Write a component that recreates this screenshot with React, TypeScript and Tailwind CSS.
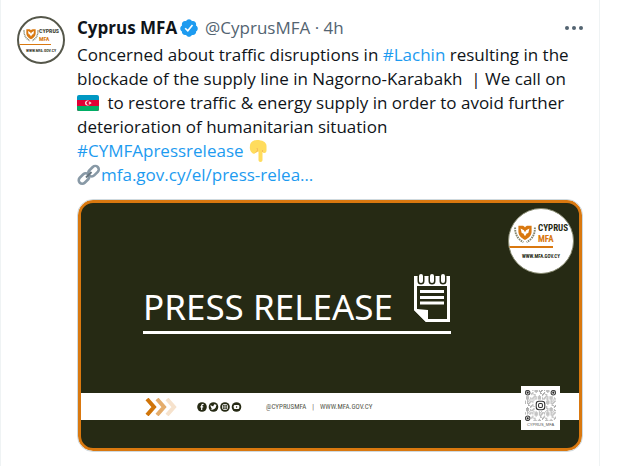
import React from "react";

const INK = "#262a14";
const ORANGE = "#d9780f";

function Emblem({ className }: { className: string }) {
  return (
    <svg viewBox="0 0 40 36" className={className} aria-hidden="true">
      <path
        d="M8 3h7c2 0 4 1 5 3 1-2 3-3 5-3h7v11c0 7-5 11-12 15C13 25 8 21 8 14z"
        fill={ORANGE}
      />
      <path d="M12 8l6 3 2 4 2-4 6-3-2 8-3 1-3 5-3-5-3-1z" fill="#fff" />
      <path
        d="M2 6c0 13 4 20 15 27M38 6c0 13-4 20-15 27"
        fill="none"
        stroke="#85876f"
        strokeWidth="3.500"
        strokeDasharray="3 1.5"
      />
    </svg>
  );
}

function VerifiedBadge() {
  return (
    <svg viewBox="0 0 24 24" className="size-5 shrink-0" role="img" aria-label="Verified account">
      <path
        fill="#1d9bf0"
        d="M22.5 12.5c0-1.58-.875-2.95-2.148-3.6.154-.435.238-.905.238-1.4 0-2.21-1.71-3.998-3.818-3.998-.47 0-.92.084-1.336.25C14.818 2.415 13.51 1.5 12 1.5s-2.816.917-3.437 2.25c-.415-.165-.866-.25-1.336-.25-2.11 0-3.818 1.79-3.818 4 0 .494.083.964.237 1.4-1.272.65-2.147 2.018-2.147 3.6 0 1.495.782 2.798 1.942 3.486-.02.17-.032.34-.032.514 0 2.21 1.708 4 3.818 4 .47 0 .92-.086 1.335-.25.62 1.334 1.926 2.25 3.437 2.25 1.512 0 2.818-.916 3.437-2.25.415.163.865.248 1.336.248 2.11 0 3.818-1.79 3.818-4 0-.174-.012-.344-.033-.513 1.158-.687 1.943-1.99 1.943-3.484z"
      />
      <path d="M7.4 12.3l3.2 3.1 5.6-7" fill="none" stroke="#fff" strokeWidth="2" />
    </svg>
  );
}

function FlagAzerbaijan() {
  return (
    <svg viewBox="0 0 22 16" className="mr-1 inline-block h-4 w-[22px] align-[-2px]" role="img" aria-label="Azerbaijan">
      <clipPath id="flag-clip">
        <rect width="22" height="16" rx="2" />
      </clipPath>
      <g clipPath="url(#flag-clip)">
        <rect width="22" height="16" fill="#0098c3" />
        <rect y="5" width="22" height="11" fill="#e00034" />
        <rect y="11" width="22" height="5" fill="#00ae65" />
      </g>
      <circle cx="10.6" cy="8" r="2.500" fill="#fff" />
      <circle cx="11.3" cy="8" r="2" fill="#e00034" />
      <path d="M13 6.6l.4 1 1-.4-.4 .8.4 1-1-.4-.4 1-.4-1-1 .4.4-1-.4-.8 1 .4z" fill="#fff" />
    </svg>
  );
}

function PointDown() {
  return (
    <svg viewBox="0 0 22 22" className="inline-block size-[22px] align-[-5px]" role="img" aria-label="Pointing down">
      <path
        fill="#ffdc5d"
        d="M2 6C2 2.500 5 0 9 0c5 0 9.500 2 9.500 6v4.500c0 1.500-.8 2.500-2 2.500s-1.500-.5-2-1V20c0 1.200-.8 2-2 2s-2-.8-2-2v-8.500L8 12.500c-1 1.500-3 1.500-4 .3C2 11.500 1.500 8 2 6z"
      />
      <path d="M7.500 12.500c2-1 2.500-2.500 1.500-4.500M14.500 12v-2" fill="none" stroke="#efa85a" strokeWidth=".7" />
    </svg>
  );
}

function ChainLink() {
  return (
    <svg viewBox="0 0 24 24" className="inline-block size-6 align-[-6px]" role="img" aria-label="Link">
      <g fill="none" strokeWidth="2.600" stroke="#8899a6">
        <rect x="10.500" y="4.700" width="12" height="7" rx="3.500" transform="rotate(-45 16.500 8.200)" />
        <rect x="1" y="12" width="12" height="7" rx="3.500" transform="rotate(-45 7 15.500)" />
        <path d="M9 14.500l5.500-5.500" stroke="#66757f" strokeWidth="2" />
      </g>
    </svg>
  );
}

function Notepad() {
  return (
    <svg viewBox="0 0 38 50" className="h-[50px] w-[38px]" aria-hidden="true">
      <path fill="#fff" d="M1 3h36v46H13L1 37z" />
      <path fill={INK} d="M4 13h30v33H15v-9L4 36z" />
      <path fill="#fff" d="M1 37l3-1 4 2 6-1v7l1 2v3h-2z" />
      <path d="M8 4v4M19 4v4M30 4v4" stroke={INK} strokeWidth="7" strokeLinecap="round" />
      <path d="M8 3v5M19 3v5M30 3v5" stroke="#fff" strokeWidth="4" strokeLinecap="round" />
      <path d="M7 18.500h24M7 24.500h24M7 30h24" stroke="#fff" strokeWidth="3" />
    </svg>
  );
}

function Chevrons() {
  return (
    <svg viewBox="0 0 32 18" className="h-[18px] w-8" fill="none" strokeWidth="4" aria-hidden="true">
      <path d="M22 1l7 8-7 8" stroke="#f6e2cc" />
      <path d="M12 1l7 8-7 8" stroke="#e4ac6b" />
      <path d="M2 1l7 8-7 8" stroke="#d07408" />
    </svg>
  );
}

function SocialIcons() {
  return (
    <svg viewBox="0 0 45 10" className="h-[10px] w-[45px]" aria-hidden="true">
      {[5, 16.5, 28, 39.5].map((x) => (
        <circle key={x} cx={x} cy="5" r="4.800" fill={INK} />
      ))}
      <path d="M6.600 2.500c-1.500-.3-1.900.3-1.900 1.500v4M3.400 4.800h2.800" fill="none" stroke="#fff" strokeWidth="1.200" />
      <path d="M13.500 3c1 1 2 1.300 3 1.300C16.500 2 18.500 2 19 3l.8-.2-.7 1C19 7 16 8.500 13.500 7.200l1.500-.6c-1-.8-1.600-2-1.500-3.600z" fill="#fff" />
      <rect x="25.500" y="2.500" width="5" height="5" rx="1.400" fill="none" stroke="#fff" strokeWidth=".8" />
      <circle cx="28" cy="5" r="1.200" fill="none" stroke="#fff" strokeWidth=".7" />
      <rect x="36.700" y="3" width="5.600" height="4" rx="1.200" fill="#fff" />
      <path d="M39 4v2l1.600-1z" fill={INK} />
    </svg>
  );
}

const MODULES = Array.from({ length: 29 * 29 }, (_, i) => ({ x: i % 29, y: Math.floor(i / 29) })).filter(
  ({ x, y }) => {
    const corner = (x < 6 && y < 6) || (x > 22 && y < 6) || (x < 6 && y > 22);
    const middle = Math.abs(x - 14) < 6 && Math.abs(y - 14) < 6;
    return !corner && !middle && (x * x * 7 + y * y * 13 + x * y * 5 + x * 3) % 11 < 5;
  }
);

function QrCode() {
  return (
    <svg viewBox="0 0 29 29" className="size-[31px]" role="img" aria-label="QR code">
      {MODULES.map(({ x, y }) => (
        <rect key={`${x}-${y}`} x={x} y={y} width=".8" height=".8" fill="#888" />
      ))}
      {[
        [2.5, 2.5],
        [26.5, 2.5],
        [2.5, 26.5],
      ].map(([x, y]) => (
        <g key={`${x}-${y}`}>
          <circle cx={x} cy={y} r="2.100" fill="none" stroke="#444" />
          <circle cx={x} cy={y} r="1" fill="#222" />
        </g>
      ))}
      <rect x="10.500" y="10.500" width="8" height="8" rx="2.500" fill="none" stroke="#333" />
      <rect x="12.700" y="12.700" width="3.600" height="3.600" rx="1" fill="none" stroke="#333" />
    </svg>
  );
}

function Avatar() {
  return (
    <div className="flex size-12 shrink-0 flex-col justify-center overflow-hidden rounded-full border-2 border-[#55574a] bg-white font-['Roboto_Condensed','Roboto',sans-serif] font-bold text-[#3c3e30]">
      <div className="flex items-center pl-1">
        <Emblem className="h-[14px] w-4 shrink-0" />
        <div className="text-[6px] leading-[8px]">
          <div>CYPRUS</div>
          <div className="text-[#d9780f]">MFA</div>
        </div>
      </div>
      <div className="mt-px h-px w-8 bg-[#d9780f]" />
      <div className="mt-1 text-center text-[4px] leading-[4px]">WWW.MFA.GOV.CY</div>
    </div>
  );
}

function PressCard() {
  return (
    <a
      href="#press-release"
      aria-label="Press release"
      className="relative mt-3 block overflow-hidden rounded-2xl border border-[#cfd9de] text-white"
    >
      <div className="overflow-hidden rounded-[15px] border-[3px] border-[#d9780f] bg-[#262a14]">
        <div className="flex h-[190px] flex-col pl-[62px] pt-[70px]">
          <div className="flex w-[308px] items-end justify-between border-b-[3px] border-white pb-2">
            <span className="whitespace-nowrap font-['Noto_Sans',sans-serif] text-[35px] leading-8">PRESS RELEASE</span>
            <Notepad />
          </div>
        </div>
        <div className="flex h-[27px] items-center bg-white pl-16 font-['Roboto_Condensed','Roboto',sans-serif] text-[7px] text-[#55574a]">
          <Chevrons />
          <div className="ml-5">
            <SocialIcons />
          </div>
          <span className="ml-6">@CYPRUSMFA</span>
          <span className="mx-1.5">|</span>
          <span>WWW.MFA.GOV.CY</span>
        </div>
        <div className="h-7" />
      </div>

      <div className="absolute right-2 top-2 flex size-[66px] flex-col justify-center overflow-hidden rounded-full border border-[#85886f] bg-white font-['Roboto_Condensed','Roboto',sans-serif] font-bold text-[#262a14]">
        <div className="flex items-center gap-0.5 pl-[5px]">
          <Emblem className="h-5 w-[22px] shrink-0" />
          <div className="text-[9px] leading-[11px]">
            <div>CYPRUS</div>
            <div className="text-[#d9780f]">MFA</div>
          </div>
        </div>
        <div className="mt-px h-0.5 w-11 bg-[#d9780f]" />
        <div className="mt-1 text-center text-[5px] leading-[8px]">WWW.MFA.GOV.CY</div>
      </div>

      <div className="absolute bottom-[21px] right-[22px] flex h-11 w-[39px] flex-col items-center bg-white pt-1 font-['Liberation_Sans',sans-serif] text-[#555]">
        <QrCode />
        <span className="text-[4px] leading-[8px]">CYPRUS_MFA</span>
      </div>
    </a>
  );
}

export default function App() {
  return (
    <main className="min-h-screen bg-white font-['Open_Sans','Noto_Sans',sans-serif] text-[17px] leading-6 text-[#0f1419]">
      <article className="flex min-h-screen max-w-[600px] gap-3 border-x border-[#eff3f4] px-4 pt-4">
        <Avatar />
        <div className="min-w-0 flex-1">
          <header className="flex items-center whitespace-nowrap pb-[3px]">
            <a href="#profile" className="mr-0.5 font-bold">
              Cyprus MFA
            </a>
            <VerifiedBadge />
            <span className="ml-1.5 text-[#536471]">@CyprusMFA · 4h</span>
            <button type="button" aria-label="More" className="ml-auto">
              <svg viewBox="0 0 18 4" className="h-1 w-[18px]" fill="#536471">
                <circle cx="2" cy="2" r="2" />
                <circle cx="9" cy="2" r="2" />
                <circle cx="16" cy="2" r="2" />
              </svg>
            </button>
          </header>
          <p className="whitespace-nowrap">
            Concerned about traffic disruptions in{" "}
            <a href="#lachin" className="text-[#1d9bf0]">
              #Lachin
            </a>{" "}
            resulting in the
            <br />
            blockade of the supply line in Nagorno-Karabakh &nbsp;| We call on
            <br />
            <FlagAzerbaijan /> to restore traffic &amp; energy supply in order to avoid further
            <br />
            deterioration of humanitarian situation
            <br />
            <a href="#cymfa" className="text-[#1d9bf0]">
              #CYMFApressrelease
            </a>{" "}
            <PointDown />
            <br />
            <a href="#link" className="text-[#1d9bf0]">
              <ChainLink />
              mfa.gov.cy/el/press-relea…
            </a>
          </p>
          <PressCard />
        </div>
      </article>
    </main>
  );
}
